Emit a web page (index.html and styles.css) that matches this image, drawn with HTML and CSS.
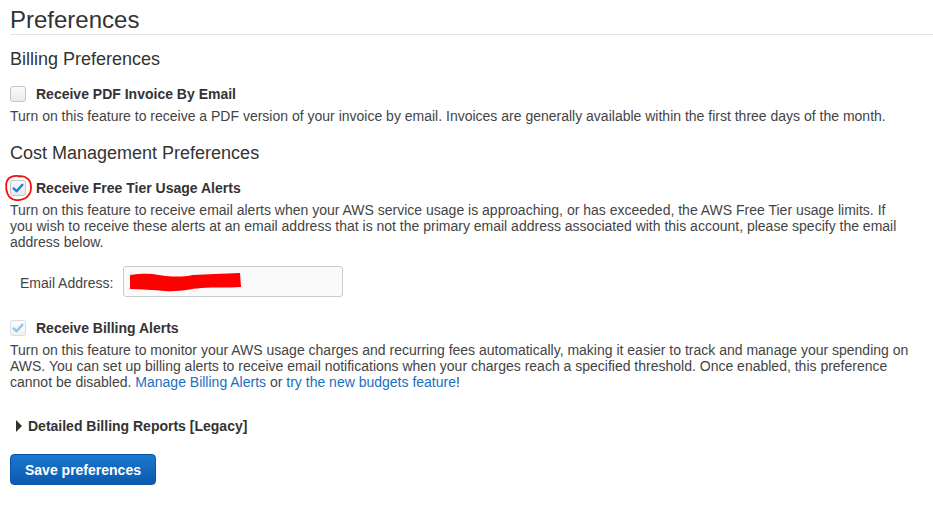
FILE: index.html
```html
<!DOCTYPE html>
<html>
<head>
<meta charset="utf-8">
<link rel="stylesheet" href="styles.css">
</head>
<body>
<div class="page">
  <h1 class="title">Preferences</h1>

  <h2 class="section">Billing Preferences</h2>
  <div class="check-row first">
    <span class="box"></span>
    <span class="label">Receive PDF Invoice By Email</span>
  </div>
  <p class="desc">Turn on this feature to receive a PDF version of your invoice by email. Invoices are generally available within the first three days of the month.</p>

  <h2 class="section cost">Cost Management Preferences</h2>
  <div class="check-row">
    <span class="box checked">
      <svg class="tick" viewBox="0 0 16 16" width="16" height="16"><path d="M3.6 8.4 L6.6 11.2 L12.4 4.8" fill="none" stroke="#1f7fd0" stroke-width="2.4" stroke-linecap="round" stroke-linejoin="round"/></svg>
      <svg class="circle" viewBox="0 0 30 30" width="30" height="32"><path d="M17 3.5 C10 1.5 3 4 2.2 11 C1.5 18 4 25.5 11 26.8 C18 28 24.5 25 26.5 18.5 C28.2 12.5 26.5 6.5 21 4 C18.5 3 16 2.8 14.2 3.4" fill="none" stroke="#ee1111" stroke-width="1.8" stroke-linecap="round"/></svg>
    </span>
    <span class="label">Receive Free Tier Usage Alerts</span>
  </div>
  <p class="desc">Turn on this feature to receive email alerts when your AWS service usage is approaching, or has exceeded, the AWS Free Tier usage limits. If you wish to receive these alerts at an email address that is not the primary email address associated with this account, please specify the email address below.</p>

  <div class="email-row">
    <span class="email-label">Email Address:</span>
    <div class="input">
      <svg class="scribble" viewBox="0 0 116 22" width="116" height="22"><path d="M3 4 C12 3 22 2 32 4 C45 6 55 6 66 4 C80 3 95 3 113 2 L114 16 C100 17 88 16 74 17 C62 18 52 21 38 20 C26 19 14 18 3 18 Z" fill="#ff0000"/></svg>
    </div>
  </div>

  <div class="check-row alerts">
    <span class="box checked disabled">
      <svg class="tick" viewBox="0 0 16 16" width="16" height="16"><path d="M3.6 8.4 L6.6 11.2 L12.4 4.8" fill="none" stroke="#8ec5ee" stroke-width="2.4" stroke-linecap="round" stroke-linejoin="round"/></svg>
    </span>
    <span class="label">Receive Billing Alerts</span>
  </div>
  <p class="desc">Turn on this feature to monitor your AWS usage charges and recurring fees automatically, making it easier to track and manage your spending on AWS. You can set up billing alerts to receive email notifications when your charges reach a specified threshold. Once enabled, this preference cannot be disabled. <a href="#">Manage Billing Alerts</a> or <a href="#">try the new budgets feature</a>!</p>

  <div class="reports">
    <span class="caret"></span>
    <span class="label">Detailed Billing Reports [Legacy]</span>
  </div>

  <button class="save">Save preferences</button>
</div>
</body>
</html>
```

FILE: styles.css
```css
* { box-sizing: border-box; }
html, body { margin: 0; padding: 0; background: #fff; }
body {
  font-family: "Liberation Sans", Arial, sans-serif;
  font-size: 14px;
  color: #444;
}
.page {
  padding: 0 0 0 10px;
  width: 933px;
}
.title {
  margin: 6px 0 0;
  font-size: 24px;
  line-height: 28px;
  font-weight: normal;
  color: #333;
  border-bottom: 1px solid #e3e3e3;
}
.section {
  margin: 12px 0 0;
  font-size: 18px;
  line-height: 24px;
  font-weight: normal;
  color: #333;
}
.section.cost { margin-top: 17px; }
.check-row {
  display: flex;
  align-items: center;
  gap: 10px;
  margin-top: 13px;
  line-height: 20px;
}
.check-row.alerts { margin-top: 21px; }
.label {
  font-weight: bold;
  color: #333;
}
.box {
  position: relative;
  width: 16px;
  height: 16px;
  border: 1px solid #c6c6c6;
  border-radius: 3px;
  background: linear-gradient(#fbfbfb, #e9e9e9);
  flex: none;
}
.box.disabled { border-color: #dcdcdc; background: linear-gradient(#fdfdfd, #f1f1f1); }
.box .tick { position: absolute; left: -1px; top: -1px; }
.box .circle { position: absolute; left: -7px; top: -9px; }
.desc {
  margin: 4px 0 0;
  max-width: 901px;
  line-height: 16px;
}
.desc a { color: #1a6fbf; text-decoration: none; }
.email-row {
  display: flex;
  align-items: center;
  gap: 10px;
  margin-top: 16px;
  padding-left: 10px;
}
.email-label { color: #444; padding-top: 3px; }
.input {
  position: relative;
  width: 220px;
  height: 31px;
  border: 1px solid #cccccc;
  border-radius: 3px;
  background: #fafafa;
}
.scribble { position: absolute; left: 3px; top: 4px; }
.reports {
  display: flex;
  align-items: center;
  gap: 6px;
  margin-top: 26px;
  padding-left: 6px;
  line-height: 20px;
}
.caret {
  width: 0;
  height: 0;
  border-top: 6px solid transparent;
  border-bottom: 6px solid transparent;
  border-left: 6px solid #333;
}
.save {
  display: block;
  margin-top: 18px;
  height: 31px;
  padding: 0 14px;
  border: 1px solid #0a55a5;
  border-radius: 4px;
  background: linear-gradient(#1a78cf, #0b5aae);
  color: #fff;
  font-family: "Liberation Sans", Arial, sans-serif;
  font-size: 14px;
  font-weight: bold;
}
```
